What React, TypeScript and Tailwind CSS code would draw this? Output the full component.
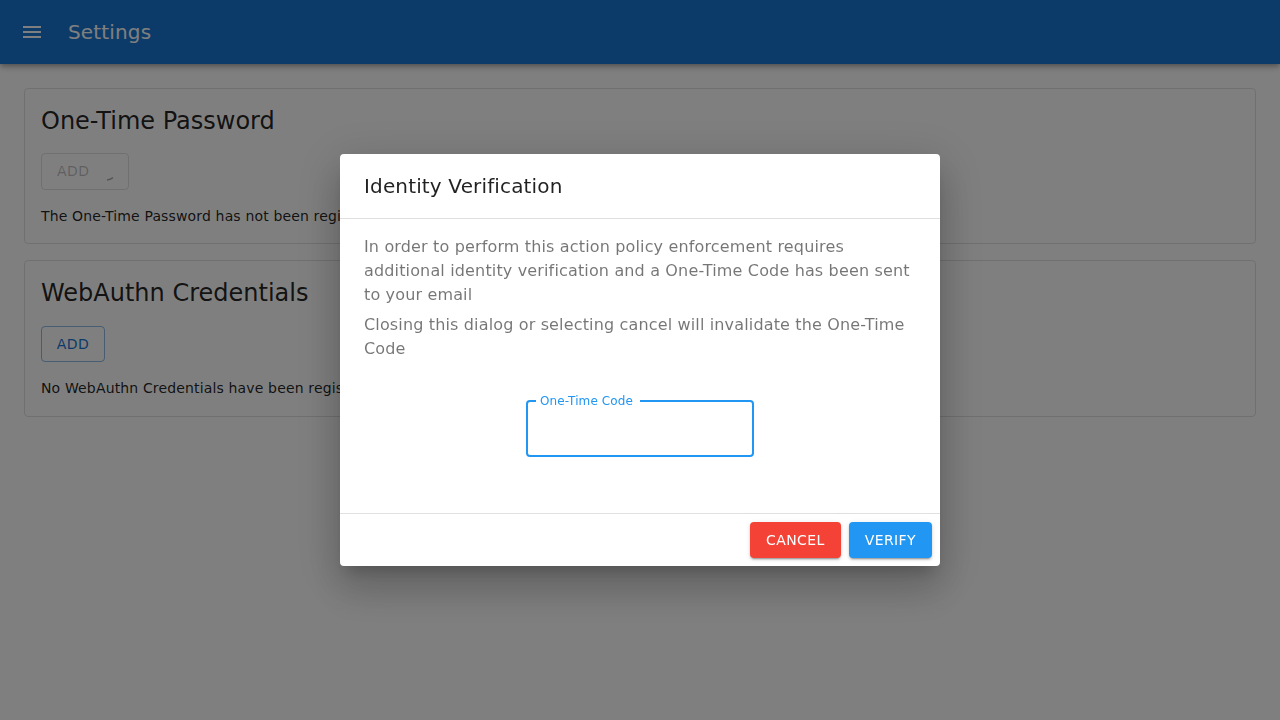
import React from "react";

const FONT = "font-['DejaVu_Sans',sans-serif]";
const BTN_SHADOW =
  "shadow-[0_3px_1px_-2px_rgba(0,0,0,0.2),0_2px_2px_0_rgba(0,0,0,0.14),0_1px_5px_0_rgba(0,0,0,0.12)]";

const MenuIcon = () => (
  <svg width="24" height="24" viewBox="0 0 24 24" fill="currentColor">
    <path d="M3 18h18v-2H3v2zm0-5h18v-2H3v2zm0-7v2h18V6H3z" />
  </svg>
);

const Section = ({ title, children }: { title: string; children: React.ReactNode }) => (
  <div className="flex flex-col items-start rounded border border-black/12 px-4 pt-4 pb-[17px]">
    <h5 className="mb-4 text-2xl leading-8 text-black/87">{title}</h5>
    {children}
  </div>
);

const VerifyDialog = () => (
  <div className="fixed inset-0 flex items-center justify-center bg-black/50">
    <div className="flex h-[412px] w-[600px] flex-col rounded bg-white shadow-[0_11px_15px_-7px_rgba(0,0,0,0.2),0_24px_38px_3px_rgba(0,0,0,0.14),0_9px_46px_8px_rgba(0,0,0,0.12)]">
      <h2 className="border-b border-black/12 px-6 py-4 text-xl leading-8 tracking-[0.15px] text-black/87">
        Identity Verification
      </h2>
      <div className="flex-1 px-6 pt-4 text-base leading-6 text-black/54 tracking-[0.15px]">
        <p className="mb-[6px]">
          In order to perform this action policy enforcement requires additional identity
          verification and a One-Time Code has been sent to your email
        </p>
        <p>Closing this dialog or selecting cancel will invalidate the One-Time Code</p>
        <div className="mt-[39px] flex justify-center">
          <div className="relative h-[57px] w-[228px] rounded border-2 border-[#2196f3]">
            <label className="absolute -top-2 left-2 bg-white pl-1 pr-[7px] text-xs leading-[14px] tracking-[0.11px] text-[#2196f3]">
              One-Time Code
            </label>
          </div>
        </div>
      </div>
      <div className="flex justify-end gap-2 border-t border-black/12 p-2">
        <button
          className={`h-9 rounded bg-[#f44336] px-4 text-sm tracking-[0.4px] text-white ${BTN_SHADOW}`}
        >
          CANCEL
        </button>
        <button
          className={`h-9 rounded bg-[#2196f3] px-4 text-sm tracking-[0.4px] text-white ${BTN_SHADOW}`}
        >
          VERIFY
        </button>
      </div>
    </div>
  </div>
);

export default function App() {
  return (
    <div className={`h-[720px] overflow-hidden bg-white ${FONT}`}>
      <header className="flex h-16 items-center bg-[#1976d2] pl-5 text-white shadow-[0_2px_4px_-1px_rgba(0,0,0,0.2),0_4px_5px_0_rgba(0,0,0,0.14),0_1px_10px_0_rgba(0,0,0,0.12)]">
        <MenuIcon />
        <h6 className="ml-6 text-xl tracking-[0.15px]">Settings</h6>
      </header>
      <main className="flex flex-col gap-4 p-6">
        <Section title="One-Time Password">
          <div className="relative flex h-[37px] w-[88px] items-center rounded border border-black/12 px-[15px] pb-[2px] text-sm tracking-[0.4px] text-black/26">
            ADD
            <svg className="absolute left-[63px] top-[21px]" width="10" height="8" viewBox="0 0 10 8" fill="none">
              <path d="M2 5 C4 4.9 6 4.3 8 2.6" stroke="rgba(0,0,0,0.32)" strokeWidth="1.5" />
            </svg>
          </div>
          <p className="mt-4 text-sm leading-5 tracking-[0.15px] text-black/87">
            The One-Time Password has not been registered.
          </p>
        </Section>
        <Section title="WebAuthn Credentials">
          <button className="mt-px h-9 w-16 rounded border border-[#1976d2]/50 text-sm tracking-[0.4px] text-[#1976d2]">
            ADD
          </button>
          <p className="mt-4 mb-px text-sm leading-5 tracking-[0.15px] text-black/87">
            No WebAuthn Credentials have been registered.
          </p>
        </Section>
      </main>
      <VerifyDialog />
    </div>
  );
}
